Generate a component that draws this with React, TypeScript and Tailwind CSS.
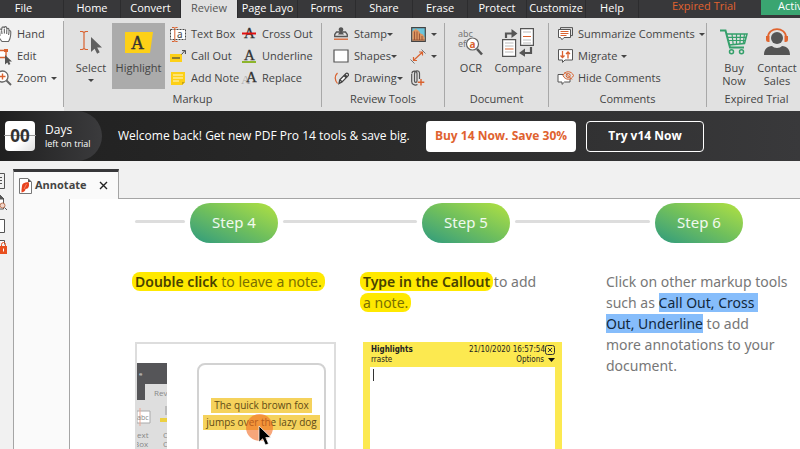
import React, { useState } from 'react';

interface ToolProps {
  icon: React.ReactNode;
  label?: string;
  caret?: boolean;
  tight?: boolean;
  name?: string;
}

const menuTabs = [
  { label: 'File', width: 'w-[64px] pr-4' },
  { label: 'Home', width: 'w-[57px]' },
  { label: 'Convert', width: 'w-[60px]' },
  { label: 'Review', width: 'w-[57px]' },
  { label: 'Page Layo', width: 'w-[60px]' },
  { label: 'Forms', width: 'w-[58px]' },
  { label: 'Share', width: 'w-[57px]' },
  { label: 'Erase', width: 'w-[55px]' },
  { label: 'Protect', width: 'w-[59px]' },
  { label: 'Customize', width: 'w-[59px]' },
  { label: 'Help', width: 'w-[53px]' },
];

function Caret() {
  return (
    <svg className="shrink-0" width="6" height="3" viewBox="0 0 6 3">
      <path d="M0 0h6L3 3z" fill="#444" />
    </svg>
  );
}

function Tool({ icon, label, caret, tight, name }: ToolProps) {
  return (
    <button type="button" aria-label={name} className="flex h-[22px] items-center gap-1 whitespace-nowrap">
      <span className="flex w-[18px] shrink-0 justify-center">{icon}</span>
      <span className={`flex items-center ${tight ? 'gap-0' : 'gap-1'}`}>
        {label}
        {caret && <Caret />}
      </span>
    </button>
  );
}

function Group({ title, width, children }: { title: string; width: string; children: React.ReactNode }) {
  return (
    <section className={`flex shrink-0 flex-col pt-[5px] ${width}`}>
      <div className="flex h-[68px] items-start border-r border-[#a8a8a8]">{children}</div>
      <h2 className="h-4 border-r border-[#a8a8a8] text-center leading-4">{title}</h2>
    </section>
  );
}

/* ---- Ribbon icons ---- */

function HandIcon() {
  return (
    <svg width="15" height="17" viewBox="0 0 15 17" fill="#fff" stroke="#666" strokeWidth="1.1" strokeLinejoin="round">
      <path d="M5 15.500C3 13 1 10.500.6 9c0-1.300 1.500-1.200 2.400.5L2.500 4c0-1.400 1.800-1.400 2 0L5 2c0-1.500 2-1.500 2.200 0L7.500 1.500c.2-1.300 2-1.200 2.100.3l.3 1.400c.3-1.200 1.900-1 2 .2l.1 2c.4-1 1.800-.8 1.800.5 0 3.500-.2 6.500-2.300 9.600z" />
      <path d="M4.600 4.500 5 8M7.300 3l.1 4.500M9.800 3.500 9.700 8M12 6l-.4 3" fill="none" />
    </svg>
  );
}

function EditIcon() {
  return (
    <svg width="16" height="17" viewBox="0 0 16 17">
      <path d="M1 2.500h9v7H1z" fill="#fff" stroke="#d9622f" strokeWidth="1.400" />
      <path d="M0 1h3v3H0zM8 1h4v3H8zM0 8h3v3H0z" fill="#d9622f" />
      <path d="M9 7v9.500l2.300-2.100 1.400 2.500 1.700-1-1.300-2.400H16z" fill="#555" />
    </svg>
  );
}

function ZoomIcon() {
  return (
    <svg width="16" height="16" viewBox="0 0 16 16" fill="none">
      <circle cx="6.500" cy="6.500" r="5.500" fill="#fff" stroke="#666" strokeWidth="1.300" />
      <path d="m10.500 10.500 4.500 4.500" stroke="#666" strokeWidth="2" />
      <path d="M6.500 3.500v6M3.500 6.500h6" stroke="#d9622f" strokeWidth="1.400" />
    </svg>
  );
}

function SelectIcon() {
  return (
    <svg width="24" height="25" viewBox="0 0 24 25">
      <path d="M1 1.500h2.500L5 2.500l1.500-1H9M5 2.500v16M1 19.500h2.500L5 18.500l1.500 1H9" fill="none" stroke="#d9622f" strokeWidth="1.200" />
      <path d="M12 7v15l3.600-3.300 2.500 5 2.600-1.400-2.500-4.700H23z" fill="#606060" />
    </svg>
  );
}

function HighlightIcon() {
  return (
    <svg width="28" height="21" viewBox="0 0 28 21">
      <path d="M0 0h28l-3 21H0z" fill="#fdd017" />
      <text x="12.500" y="17" textAnchor="middle" fontSize="18" fontFamily="Liberation Serif, serif" fill="#333" stroke="#333" strokeWidth=".4">A</text>
    </svg>
  );
}

function TextBoxIcon() {
  return (
    <svg width="16" height="15" viewBox="0 0 16 15">
      <path d="M.5 2.500h15v10H.5z" fill="#fff" stroke="#444" strokeDasharray="2 1" />
      <path d="M2 .5h2l.8.5.8-.5h2M4.800 1v13M2 14.500h2l.8-.5.8.5h2" fill="none" stroke="#d9622f" />
      <text x="7" y="10.500" fontSize="10" fontFamily="Noto Sans, sans-serif" fill="#444">a</text>
    </svg>
  );
}

function CallOutIcon() {
  return (
    <svg width="16" height="12" viewBox="0 0 16 12">
      <path d="M0 4h12v8H0z" fill="#fdd017" />
      <path d="M2 8h8" stroke="#444" strokeWidth="1.200" />
      <path d="m11.500 4.500 3.500-4M12 .6h3.400V4" fill="none" stroke="#444" />
    </svg>
  );
}

function NoteIcon() {
  return (
    <svg width="14" height="13" viewBox="0 0 14 13">
      <path d="M0 0h14v10l-3 3H0z" fill="#fdd017" />
      <path d="M2 3h10M2 6h10M2 9h6" stroke="#fff8d0" strokeWidth="1.200" />
      <path d="M11 13v-3h3z" fill="#c8a415" />
    </svg>
  );
}

function LetterIcon({ kind }: { kind: 'cross' | 'underline' | 'replace' }) {
  return (
    <svg width="16" height="14" viewBox="0 0 16 14" fontFamily="Liberation Serif, serif">
      {kind === 'replace' && <text x="0" y="13" fontSize="13" fill="#b0b0b0">A</text>}
      <text x={kind === 'replace' ? 5 : 3} y="11" fontSize="15" fill="#333" stroke="#333" strokeWidth=".3">A</text>
      {kind === 'cross' && <path d="M1 6.500h14" stroke="#e01010" strokeWidth="2" />}
      {kind === 'underline' && <path d="M1 13h14" stroke="#8db52c" strokeWidth="2" />}
    </svg>
  );
}

function StampIcon() {
  return (
    <svg width="14" height="14" viewBox="0 0 14 14">
      <path d="M.7 7.500 2.500 5h9l1.800 2.500v2H.7z" fill="#e1e1e1" stroke="#555" strokeWidth="1.300" />
      <path d="M4 7.500 6 4.500A2.300 2.300 0 1 1 8 4.500L10 7.500z" fill="#555" />
      <path d="M0 12.200h14" stroke="#d9622f" strokeWidth="1.300" />
    </svg>
  );
}

function ShapesIcon() {
  return (
    <svg width="16" height="14" viewBox="0 0 16 14">
      <path d="M1 1h14v12H1z" fill="#fff" stroke="#555" strokeWidth="1.200" />
    </svg>
  );
}

function DrawingIcon() {
  return (
    <svg width="15" height="13" viewBox="0 0 15 13" fill="none">
      <path d="M3.500 1C.5 4 .8 8 3.500 11.500" stroke="#d9622f" strokeWidth="1.200" />
      <path d="m5 11.500.8-3.800 6-6a1.500 1.500 0 0 1 2.200 2.200l-6 6z" fill="#fff" stroke="#444" strokeWidth="1.300" />
      <path d="m10 3.500 2.300 2.300M5.800 7.700 8.200 10M11 2.700 13.300 5" stroke="#444" strokeWidth="1.500" />
    </svg>
  );
}

function PhotoIcon() {
  return (
    <svg width="15" height="15" viewBox="0 0 15 15">
      <path d="M.7.7h13.600v13.600H.7z" fill="#6cc5dc" stroke="#444" strokeWidth="1.200" />
      <path d="m1.300 4.500 3.400-2.800L8 4l1.500 2.500 2.500 1 1.700 3v3.200H1.300z" fill="#dd9560" />
      <path d="M3.500 4.500V13M6 4.500V13M8.500 6.500V13M11 9v4M1.300 13h12.400" stroke="#8a4a30" strokeWidth=".8" />
    </svg>
  );
}

function MeasureIcon() {
  return (
    <svg width="16" height="15" viewBox="0 0 16 15" fill="none" stroke="#d9622f">
      <path d="m3.500 11.500 9-8.500M3.500 8v3.500H7M9 3h3.500v3.500" strokeWidth="1.200" />
      <path d="m.5 10.500 4 4M11.500.5l4 4" stroke="#777" />
    </svg>
  );
}

function AttachIcon() {
  return (
    <svg width="14" height="16" viewBox="0 0 14 16" fill="none">
      <path d="M6.500 14.500C3.500 16 .7 14 .7 11.500V4M3.500 4v7c0 1.800 2.500 1.800 2.500 0V3.500C6 .2 1 .2.900 3.500M8.500 9V3.500C8.500-.3 3.500 0 3.500 4" stroke="#555" strokeWidth="1.200" />
      <path d="M10 9v6.500M6.800 12.300h6.500" stroke="#d9622f" strokeWidth="1.400" />
    </svg>
  );
}

function OcrIcon() {
  return (
    <svg width="26" height="27" viewBox="0 0 26 27" fontFamily="Noto Sans, sans-serif">
      <text x="0" y="8" fontSize="9" fill="#777">abc</text>
      <text x="0" y="18" fontSize="9" fill="#777">ef</text>
      <circle cx="14.500" cy="15" r="6" fill="#fff" stroke="#666" strokeWidth="1.200" />
      <text x="11.500" y="18.500" fontSize="10" fontWeight="bold" fill="#d9622f">a</text>
      <path d="m19 20 5 5.500" stroke="#555" strokeWidth="2.600" />
    </svg>
  );
}

function CompareIcon() {
  return (
    <svg width="32" height="29" viewBox="0 0 32 29">
      <path d="M.6 11.600h13v16.800H.6zM18.600.6h12.800v16.800H18.600z" fill="#fff" stroke="#555" strokeWidth="1.200" />
      <path d="M3 15h8.500M3 18h8.500M3 24h8.500M21 4h8M21 12h8M21 15h8" stroke="#bbb" />
      <path d="M3 21h8.500M21 8.500h8" stroke="#d9622f" strokeWidth="1.200" />
      <path d="M4 10V5.500h6M29 19v6h-7" fill="none" stroke="#555" strokeWidth="2.200" />
      <path d="m9.500 1 6 4.500-6 4.500zM23 20.500 17 25l6 3.800z" fill="#555" />
    </svg>
  );
}

function CommentIcon({ kind }: { kind: 'summary' | 'migrate' | 'hide' }) {
  return (
    <svg width="17" height="14" viewBox="0 0 17 14" fill="none">
      {kind === 'summary' && (
        <>
          <path d="M3.500 2V.6h12v8H14" stroke="#555" />
          <path d="M1.500 2.500h12v8H7L5 12.700 3.500 10.500h-2z" fill="#fff" stroke="#555" />
          <path d="M3.500 4.500h8M3.500 6.500h8M3.500 8.500h6" stroke="#d9622f" />
        </>
      )}
      {kind === 'migrate' && (
        <>
          <path d="M1.500.6h14v10.400H8l-2.500 2.400V11h-4z" fill="#fff" stroke="#555" />
          <path d="M5.500 2v6.500M3.500 6.500l2 2 2-2M11 9.500V3M9 5l2-2 2 2" stroke="#d9622f" strokeWidth="1.300" />
        </>
      )}
      {kind === 'hide' && (
        <>
          <path d="M1 3.500h12V11H7.500L5 13.400V11H1z" fill="#fff" stroke="#555" />
          <path d="M6 4.500C8-.5 14.500-.5 16.500 4.500 14.500 9.500 8 9.500 6 4.500z" fill="#e1e1e1" stroke="#d9622f" />
          <circle cx="11.200" cy="4.500" r="2" stroke="#d9622f" />
          <path d="m7.500 1 7.500 7.500" stroke="#d9622f" />
        </>
      )}
    </svg>
  );
}

function CartIcon() {
  return (
    <svg width="28" height="26" viewBox="0 0 28 26" fill="none" stroke="#35a06b">
      <path d="M0 1.500h5.500l4.500 17h14" strokeWidth="2" />
      <path d="M6 5h21l-2.500 9.500L9 16" strokeWidth="1.500" />
      <path d="M7.500 8.300h18.500M8 11.500h17M12 5l1.200 10.500M16.500 5v10.500M20.500 5l-.6 10M24.500 5l-1.300 9.500" strokeWidth="1.200" />
      <circle cx="11.500" cy="22.800" r="2" strokeWidth="1.500" />
      <circle cx="21.500" cy="22.800" r="2" strokeWidth="1.500" />
    </svg>
  );
}

function ContactIcon() {
  return (
    <svg width="26" height="28" viewBox="0 0 26 28">
      <circle cx="13" cy="10" r="6" fill="#555" />
      <path d="M0 27c0-6 3-8.500 8-9 2 2.500 8 2.500 10 0 5 .5 8 3 8 9z" fill="#555" />
      <path d="M4 9C4.500-1.500 21.500-1.500 22 9" fill="none" stroke="#e0642f" strokeWidth="1.800" />
      <path d="M2 8h3.500v6H4.500A2.500 2.500 0 0 1 2 11.500zM20.500 8H24v3.500a2.500 2.500 0 0 1-2.500 2.500h-1z" fill="#e0642f" />
    </svg>
  );
}

/* ---- Page pieces ---- */

function BigTool({ icon, label, caret, className = '' }: ToolProps & { className?: string }) {
  return (
    <button type="button" className={`flex shrink-0 flex-col items-center ${className}`}>
      <span className="flex h-[38px] items-center">{icon}</span>
      <span className="whitespace-pre text-center leading-[13px]">{label}</span>
      {caret && <span className="flex pt-[5px]"><Caret /></span>}
    </button>
  );
}

function Step({ n }: { n: number }) {
  return (
    <div className="flex h-10 w-[88px] shrink-0 items-center justify-center rounded-full bg-linear-to-tr from-[#2a9a7c] via-[#6fbf5c] to-[#b2e23c] pb-0.5 text-[15px] text-white/90">
      Step {n}
    </div>
  );
}

function StepLine({ width }: { width: string }) {
  return <div className={`-mt-1 h-[3px] shrink-0 rounded-full bg-[#ddd] ${width}`} />;
}

function MiniRibbon() {
  return (
    <svg className="shrink-0" width="30" height="88" viewBox="0 0 30 88" fontFamily="Open Sans, sans-serif" fontSize="8">
      <path d="M0 0h30v88H0z" fill="#dedede" />
      <path d="M0 0h30v21H8v16H0z" fill="#555558" />
      <text x="2" y="13" fontSize="6" fill="#ddd">e</text>
      <text x="17" y="33" fill="#888">Rev</text>
      <path d="M0 48h13v12H0z" fill="#fff" stroke="#aaa" />
      <path d="M3 45v18" stroke="#eba793" />
      <text x="0" y="57" fontSize="7" fill="#888">abc</text>
      <path d="M23 55h7v4h-7z" fill="#ecd040" />
      <path d="M29 43v9" stroke="#999" />
      <text x="0" y="75" fill="#888">ext</text>
      <text x="-3" y="84" fill="#888">Box</text>
      <text x="26" y="75" fill="#888">C</text>
      <text x="26" y="84" fill="#888">C</text>
    </svg>
  );
}

function SideIcons() {
  return (
    <svg width="8" height="84" viewBox="0 0 8 84" fill="none" stroke="#555">
      <path d="M-2 .5h6.500v15H-2M-1 4.500h3M-1 7.500h3M-1 10.500h3" />
      <path d="M-3 22.500h3l3.500 3.500v10H-3" fill="#fff" />
      <path d="M0 22v4h4z" fill="#555" />
      <circle cx="2.500" cy="32.500" r="2.500" fill="#f1d5ca" stroke="#b9714f" />
      <path d="m4.500 34.500 2.500 2.500" />
      <path d="M-2 46.500h6.500v13H-2M-2 67.500h6.500v4" fill="#fff" />
      <path d="M0 73h7v8H0z" fill="#e8501f" stroke="none" />
      <path d="M1.500 73v-1.500a2 2 0 0 1 4 0V73" stroke="#e8501f" />
      <path d="M3.500 75.500v3" stroke="#fff" />
    </svg>
  );
}

export default function App() {
  const [active, setActive] = useState('Review');

  return (
    <div className="flex h-screen flex-col overflow-hidden bg-[#f1f1f1] font-['Open_Sans',sans-serif] text-[11px] text-[#444]">
      <nav className="flex h-[18px] shrink-0 bg-[#38383a] text-white">
        {menuTabs.map((tab) => (
          <button
            key={tab.label}
            type="button"
            onClick={() => setActive(tab.label)}
            className={`h-full shrink-0 whitespace-nowrap border-r border-[#2c2c2e] pb-[3px] text-center leading-[15px] ${tab.width} ${
              active === tab.label ? 'bg-[#e1e1e1] text-[#555]' : ''
            }`}
          >
            {tab.label}
          </button>
        ))}
        <span className="w-[122px] shrink-0 pl-[33px] leading-[11px] text-[#e0622f]">Expired Trial</span>
        <button type="button" className="h-[15px] shrink-0 bg-[#3aa571] pb-1 pl-[17px] pr-4 leading-[11px]">Activate</button>
      </nav>

      <div className="flex h-[93px] shrink-0 bg-[#e1e1e1]">
        <div className="w-16 shrink-0 bg-[#f1f1f1] py-[3px]">
          <div className="h-[86px] border-r border-[#a8a8a8] pt-0.5">
            <div className="-ml-[5px]">
              <Tool icon={<HandIcon />} label="Hand" />
              <Tool icon={<EditIcon />} label="Edit" />
              <Tool icon={<ZoomIcon />} label="Zoom" caret />
            </div>
          </div>
        </div>

        <Group title="Markup" width="w-[258px]">
          <BigTool icon={<SelectIcon />} label="Select" caret className="w-12 pl-1.5" />
          <BigTool icon={<HighlightIcon />} label="Highlight" className="h-[66px] w-[53px] bg-[#ababab]" />
          <div className="grid grid-cols-[71px_auto] pl-1">
            <Tool icon={<TextBoxIcon />} label="Text Box" />
            <Tool icon={<LetterIcon kind="cross" />} label="Cross Out" />
            <Tool icon={<CallOutIcon />} label="Call Out" />
            <Tool icon={<LetterIcon kind="underline" />} label="Underline" />
            <Tool icon={<NoteIcon />} label="Add Note" />
            <Tool icon={<LetterIcon kind="replace" />} label="Replace" />
          </div>
        </Group>

        <Group title="Review Tools" width="w-[123px]">
          <div className="grid grid-cols-[77px_auto] pl-[10px]">
            <Tool icon={<StampIcon />} label="Stamp" caret tight />
            <Tool icon={<PhotoIcon />} name="Photo" caret tight />
            <Tool icon={<ShapesIcon />} label="Shapes" caret tight />
            <Tool icon={<MeasureIcon />} name="Measure" caret />
            <Tool icon={<DrawingIcon />} label="Drawing" caret tight />
            <Tool icon={<AttachIcon />} name="Attach" />
          </div>
        </Group>

        <Group title="Document" width="w-[104px]">
          <BigTool icon={<OcrIcon />} label="OCR" className="ml-2 w-9" />
          <BigTool icon={<CompareIcon />} label="Compare" className="ml-1 w-[50px]" />
        </Group>

        <Group title="Comments" width="w-[158px]">
          <div className="pl-[7px]">
            <Tool icon={<CommentIcon kind="summary" />} label="Summarize Comments" caret />
            <Tool icon={<CommentIcon kind="migrate" />} label="Migrate" caret />
            <Tool icon={<CommentIcon kind="hide" />} label="Hide Comments" />
          </div>
        </Group>

        <Group title="Expired Trial" width="w-[100px]">
          <BigTool icon={<CartIcon />} label={'Buy\nNow'} className="ml-1.5 w-[42px]" />
          <BigTool icon={<ContactIcon />} label={'Contact\nSales'} className="w-[44px]" />
        </Group>
      </div>

      <div className="flex h-[50px] shrink-0 items-center bg-linear-to-r from-[#202020] via-[#2b2b2b] to-[#39393b] text-[12px] text-white">
        <div className="flex h-full w-[102px] shrink-0 items-center gap-[10px] rounded-r-full bg-linear-to-r from-[#1f1f1f] to-[#3b3b3d] pl-[5px]">
          <div className="relative flex h-[30px] w-[30px] items-center justify-center rounded-sm bg-linear-to-br from-white from-60% to-[#ddd] text-[17px] font-bold text-[#333]">
            <span className="absolute -inset-x-px top-[14px] h-px bg-[#999]" />
            <span className="relative">00</span>
          </div>
          <div>
            <div className="leading-4">Days</div>
            <div className="whitespace-nowrap text-[9px] leading-3">left on trial</div>
          </div>
        </div>
        <p className="w-[324px] shrink-0 whitespace-nowrap pl-4">
          Welcome back! Get new PDF Pro 14 tools &amp; save big.
        </p>
        <button type="button" className="h-[31px] w-[150px] shrink-0 rounded-sm bg-white font-bold text-[#e0622f]">
          Buy 14 Now. Save 30%
        </button>
        <button type="button" className="ml-[10px] h-[31px] w-[118px] shrink-0 rounded-sm border border-white font-bold">
          Try v14 Now
        </button>
      </div>

      <div className="flex min-h-0 flex-1">
        <aside className="w-[13px] shrink-0 pt-3">
          <SideIcons />
        </aside>
        <div className="flex min-w-0 flex-1 flex-col pt-2">
          <div className="flex h-[30px] shrink-0">
            <div className="flex w-[106px] items-center border-x border-t-[3px] border-x-[#a5a5a5] border-t-[#38383a] bg-[#fafafa] pl-[5px]">
              <svg className="shrink-0" width="13" height="16" viewBox="0 0 13 16">
                <path d="M.5.5h8.500l3.500 3.500v11.500H.5z" fill="#fff" stroke="#777" />
                <path d="M9 .5V4h3.500z" fill="#555" />
                <path d="M3 8c0-2.500 2-3 3.500-3.500L9.500 4c1 2 .8 5-1 6.500L6.500 11c0 2-1.500 3-4 3.500V12z" fill="#e8431f" />
                <path d="m5 11 2.500-5" stroke="#f8b3a0" strokeWidth=".6" />
              </svg>
              <span className="ml-[3px] flex-1 font-bold">Annotate</span>
              <button type="button" aria-label="Close" className="mr-[10px]">
                <svg width="9" height="9" viewBox="0 0 9 9">
                  <path d="m1 1 7 7M8 1 1 8" stroke="#222" strokeWidth="1.400" />
                </svg>
              </button>
            </div>
            <div className="flex-1 border-b border-[#a5a5a5]" />
          </div>

          <div className="flex min-h-0 flex-1 border-l border-[#a5a5a5] bg-[#fafafa]">
            <div className="w-[55px] shrink-0" />
            <main className="min-w-0 flex-1 overflow-hidden border-l border-[#a5a5a5] bg-white pl-[65px] pt-1 font-['Noto_Sans',sans-serif] text-[14px] leading-[21px] text-[#777]">
              <div className="flex items-center gap-[5px]">
                <StepLine width="w-[50px]" />
                <Step n={4} />
                <StepLine width="w-[134px]" />
                <Step n={5} />
                <StepLine width="w-[135px]" />
                <Step n={6} />
              </div>

              <div className="flex pt-7">
                <section className="w-[228px] shrink-0">
                  <p className="h-[71px]">
                    <mark className="-ml-[3px] rounded-lg bg-[#ffe900] px-[3px] text-[#7a7000]">
                      <strong className="font-semibold text-[#494200]">Double click</strong> to leave a note.
                    </mark>
                  </p>
                  <figure className="flex h-40 w-[201px] justify-between border-2 border-[#ddd] pr-2 pt-[19px]">
                    <MiniRibbon />
                    <div className="relative flex w-[129px] flex-col items-center gap-0.5 rounded-lg border-2 border-[#d2d2d2] pt-[33px] font-['Open_Sans',sans-serif] text-[10px] font-medium leading-[15px] text-[#5f4a16]">
                      <span className="whitespace-nowrap bg-[#f5d25c] px-[3px]">The quick brown fox</span>
                      <span className="whitespace-nowrap bg-[#f5d25c] px-[3px]">jumps over the lazy dog</span>
                      <span className="absolute left-[47px] top-[49px] size-[27px] rounded-full bg-[#f26a22]/60" />
                      <svg className="absolute left-[59px] top-[60px]" width="14" height="21" viewBox="0 0 14 21">
                        <path d="M1 1v16l3.700-3.200L7.500 20l3-1.300L7.800 12.500h5z" fill="#000" stroke="#fff" strokeWidth=".7" />
                      </svg>
                    </div>
                  </figure>
                </section>

                <section className="w-[243px] shrink-0">
                  <p className="h-[71px]">
                    <mark className="-mx-[3px] rounded-lg bg-[#ffe900] px-[3px] font-semibold text-[#494200]">Type in the Callout</mark> to add
                    <br />
                    <mark className="-mx-[3px] rounded-lg bg-[#ffe900] px-[3px] text-[#7a7000]">a note.</mark>
                  </p>
                  <div className="flex h-40 w-[199px] flex-col bg-[#fce950] px-[7px] pt-[3px] font-['DejaVu_Sans_Condensed','DejaVu_Sans',sans-serif] text-[8px] leading-[10px] text-[#222]">
                    <div className="flex items-center justify-between pl-px">
                      <strong>Highlights</strong>
                      <span className="flex items-center">
                        21/10/2020 16:57:54
                        <button type="button" aria-label="Close note">
                          <svg width="10" height="10" viewBox="0 0 10 10" fill="none" stroke="#333">
                            <rect x=".5" y=".5" width="9" height="9" rx="2" />
                            <path d="m3 3 4 4M7 3 3 7" />
                          </svg>
                        </button>
                      </span>
                    </div>
                    <div className="flex items-center justify-between pb-0.5 pl-px">
                      <label htmlFor="note">rraste</label>
                      <button type="button" className="flex items-center gap-1">
                        Options
                        <svg width="7" height="4" viewBox="0 0 7 4"><path d="M0 0h7L3.500 4z" fill="#111" /></svg>
                      </button>
                    </div>
                    <div className="relative flex flex-1 bg-white">
                      <textarea id="note" className="w-full resize-none p-1 outline-none" />
                      <span className="absolute left-[3px] top-0.5 h-3 w-px bg-[#333]" />
                    </div>
                  </div>
                </section>

                <section className="w-[190px] shrink-0">
                  <p>
                    Click on other markup tools
                    <br />
                    such as <mark className="bg-[#86bdfb] pr-1 text-[#12283c]">Call Out, Cross</mark>
                    <br />
                    <mark className="bg-[#86bdfb] text-[#12283c]">Out, Underline</mark> to add
                    <br />
                    more annotations to your
                    <br />
                    document.
                  </p>
                </section>
              </div>
            </main>
          </div>
        </div>
      </div>
    </div>
  );
}
